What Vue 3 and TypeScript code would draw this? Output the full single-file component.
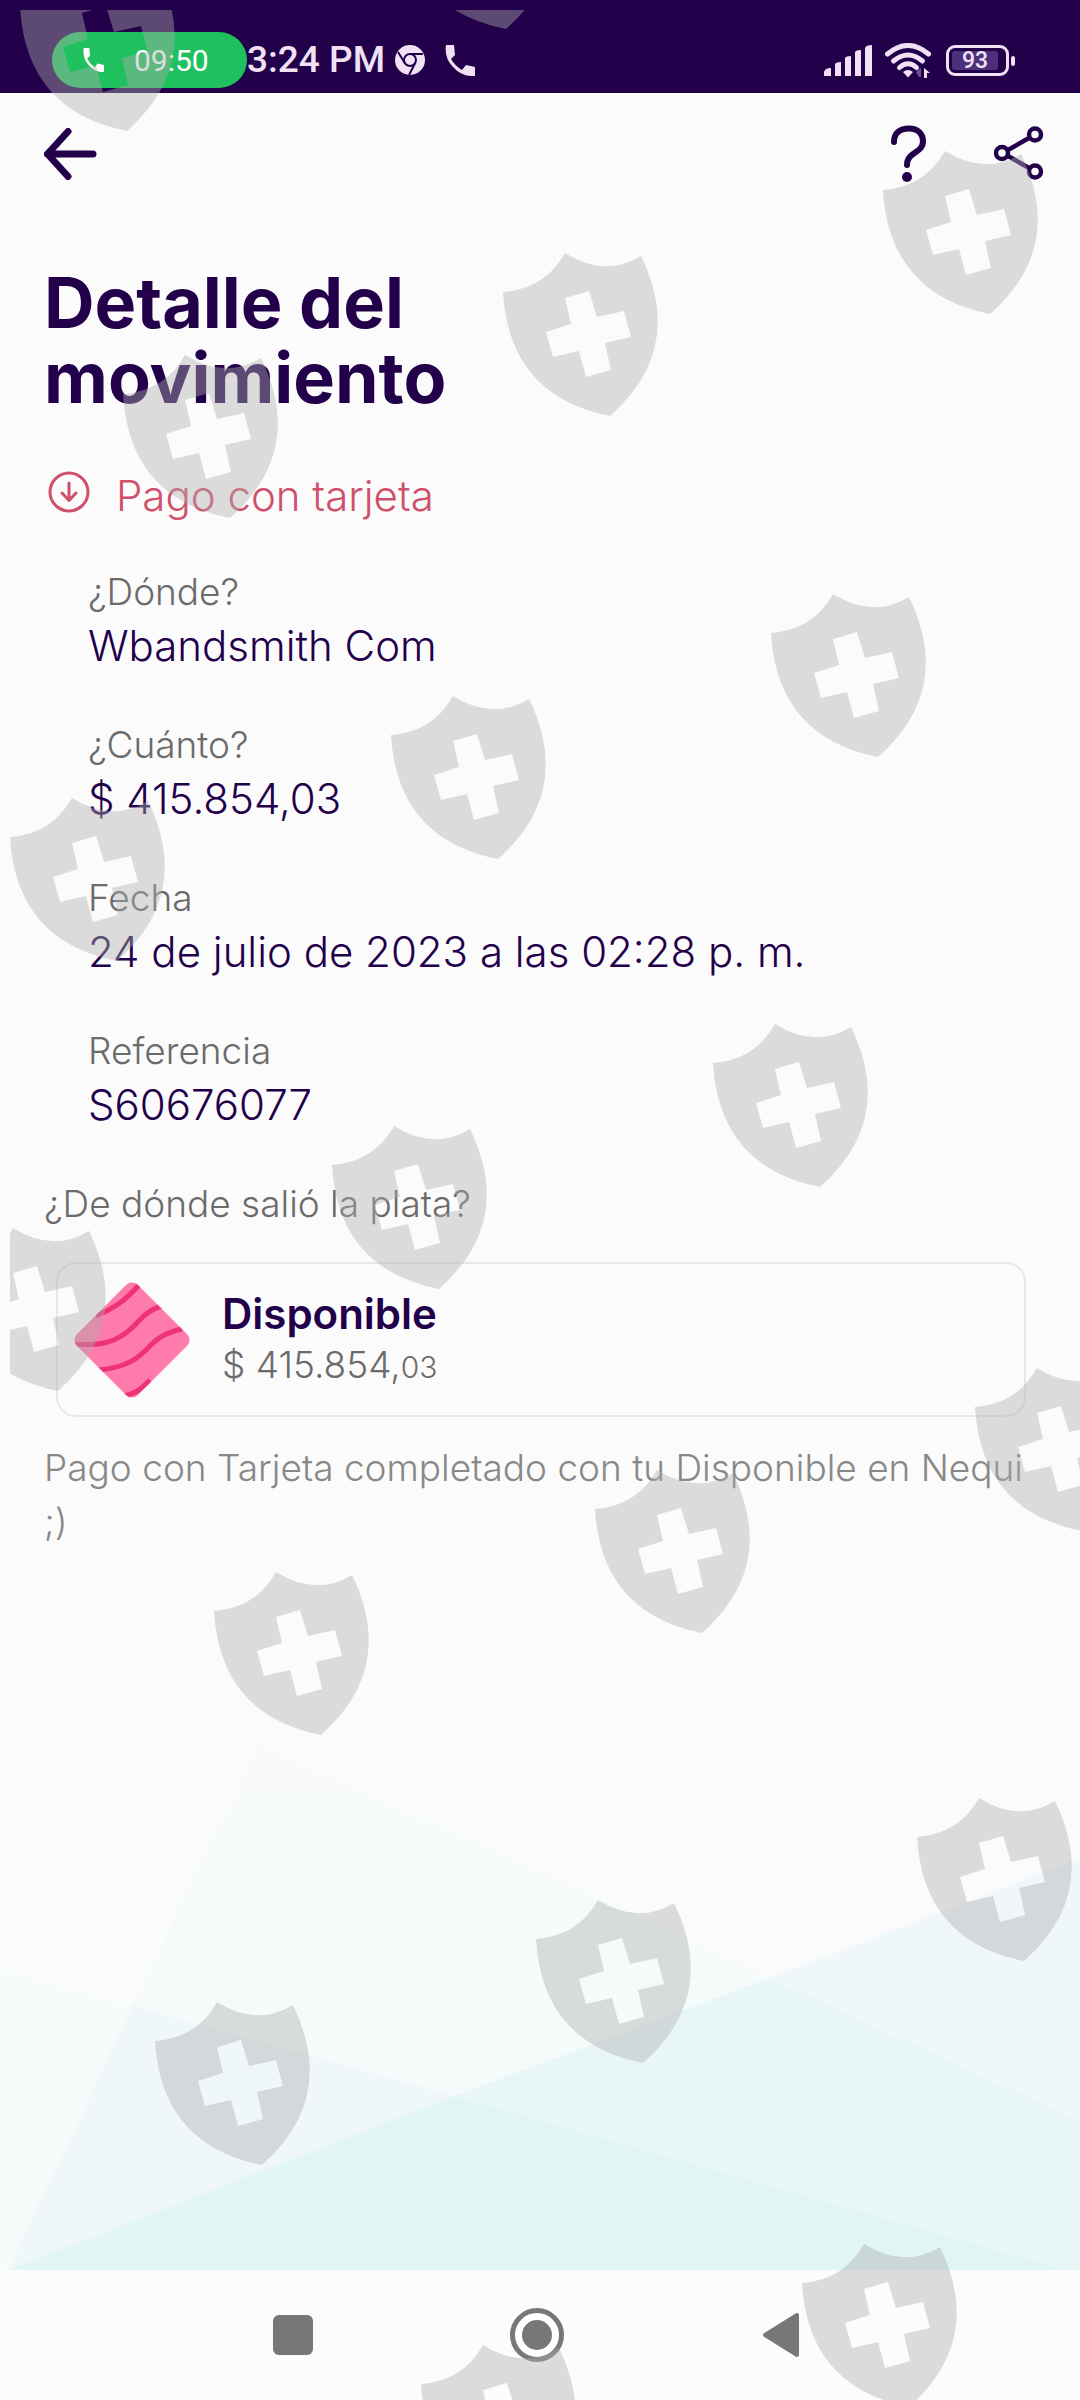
<script setup lang="ts">
interface Field {
  label: string
  value: string
}

interface Point {
  x: number
  y: number
}

const fields: Field[] = [
  { label: '¿Dónde?', value: 'Wbandsmith Com' },
  { label: '¿Cuánto?', value: '$ 415.854,03' },
  { label: 'Fecha', value: '24 de julio de 2023 a las 02:28 p. m.' },
  { label: 'Referencia', value: 'S60676077' },
]

// Top-left corner of every shield in the security watermark
const shields: Point[] = [
  { x: 399, y: -134 },
  { x: 20, y: -32 },
  { x: 883, y: 151 },
  { x: 503, y: 253 },
  { x: 123, y: 355 },
  { x: 771, y: 594 },
  { x: 391, y: 696 },
  { x: 10, y: 798 },
  { x: 713, y: 1024 },
  { x: 332, y: 1126 },
  { x: -49, y: 1228 },
  { x: 975, y: 1368 },
  { x: 595, y: 1470 },
  { x: 214, y: 1572 },
  { x: 917, y: 1798 },
  { x: 536, y: 1900 },
  { x: 155, y: 2002 },
  { x: 802, y: 2244 },
  { x: 421, y: 2345 },
]
</script>

<template>
  <div class="screen">
    <header class="status">
      <div class="call">
        <svg width="21" height="24" viewBox="0 0 30 31" preserveAspectRatio="none" aria-hidden="true">
          <path d="M1 0H9L10 10L6 14Q10 21 17 25L21 20L30 22V31Q17 32 8 22Q-1 13 1 0Z" fill="#fff" />
        </svg>
        <span>09:50</span>
      </div>
      <span class="clock">3:24 PM</span>
      <svg class="chrome" width="30" height="30" viewBox="0 0 30 30" aria-hidden="true">
        <circle cx="15" cy="15" r="15" fill="#f0e2f4" />
        <g fill="none" stroke="#22004a" stroke-width="2">
          <circle cx="15" cy="15" r="6" />
          <path d="M15 9H28M9.800 18L3 7M20.200 18L14 30" />
        </g>
      </svg>
      <svg class="phone" width="30" height="31" viewBox="0 0 30 31" aria-hidden="true">
        <path d="M1 0H9L10 10L6 14Q10 21 17 25L21 20L30 22V31Q17 32 8 22Q-1 13 1 0Z" fill="#f0e2f4" />
      </svg>
      <span class="spacer"></span>
      <svg class="signal" width="48" height="31" viewBox="0 0 48 31" aria-hidden="true">
        <g fill="#f0e2f4">
          <path d="M0 31V27Q1 23 7 23V31Z" />
          <path d="M11 31V19Q12 17 17 17V31Z" />
          <path d="M21 31V13Q22 11 27 11V31Z" />
          <path d="M31 31V7Q32 5 37 5V31Z" />
          <path d="M41 31V3Q42 0 48 0V31Z" />
        </g>
      </svg>
      <svg class="wifi" width="46" height="35" viewBox="0 0 46 35" aria-hidden="true">
        <g fill="none" stroke="#f0e2f4" stroke-width="5" stroke-linecap="round">
          <path d="M2.500 11Q23 -6 43.500 11" />
          <path d="M8.500 18Q23 6 37.500 18" />
          <path d="M14.500 24.500Q23 17 31.500 24.500" />
        </g>
        <path d="M18 29Q23 25 28 29L23 34.500Z" fill="#f0e2f4" />
        <path d="M31 29L36 25V34H34Z" fill="#6d548c" />
        <path d="M39 35V25L45 30H42V35Z" fill="#f0e2f4" />
      </svg>
      <div class="battery"><span>93</span></div>
    </header>

    <main class="page">
      <svg class="scenery" viewBox="0 0 1080 528" preserveAspectRatio="none" aria-hidden="true">
        <defs>
          <linearGradient id="peak" x1="0" y1="0" x2="0" y2="1">
            <stop offset="0" stop-color="#f9fbfa" />
            <stop offset="0.300" stop-color="#f5fbfa" />
            <stop offset="1" stop-color="#f4fbfa" />
          </linearGradient>
        </defs>
        <polygon points="0,226 133,264 8,528 0,528" fill="#f7fcfa" />
        <polygon points="8,528 258,0 770,236 454,354" fill="url(#peak)" />
        <polygon points="8,528 133,264 454,354" fill="#eff7fa" />
        <polygon points="770,236 1080,116 1080,379" fill="#f0f7fb" />
        <polygon points="454,354 770,236 1080,379 1080,528 1067,528" fill="#e9f6f8" />
        <polygon points="8,528 454,354 1067,528" fill="#e1f5f4" />
      </svg>

      <nav class="appbar">
        <button type="button" aria-label="Volver">
          <svg width="54" height="52" viewBox="0 0 54 52">
            <path d="M49 26H3.500M24 3.500L3.500 26L24 48.500" fill="none" stroke="#22004a" stroke-width="7" stroke-linecap="round" stroke-linejoin="round" />
          </svg>
        </button>
        <div class="actions">
          <button type="button" aria-label="Ayuda">
            <svg width="36" height="58" viewBox="0 0 36 58">
              <path d="M3 17C3 8 9 3.500 18 3.500C27 3.500 32 9 32 16C32 29 16 26 16 40" fill="none" stroke="#22004a" stroke-width="6" stroke-linecap="round" />
              <circle cx="16" cy="52" r="5" fill="#22004a" />
            </svg>
          </button>
          <button type="button" aria-label="Compartir">
            <svg width="50" height="56" viewBox="0 0 50 56">
              <g fill="none" stroke="#22004a" stroke-width="4.500">
                <path d="M14 24L35 12M14 30L35 42" />
                <circle cx="8" cy="27" r="6" />
                <circle cx="41" cy="8.500" r="6" />
                <circle cx="41" cy="45.500" r="6" />
              </g>
            </svg>
          </button>
        </div>
      </nav>

      <h1>Detalle del<br />movimiento</h1>

      <div class="kind">
        <svg width="42" height="42" viewBox="0 0 42 42" aria-hidden="true">
          <g fill="none" stroke="#d04f6b" stroke-width="3" stroke-linecap="round" stroke-linejoin="round">
            <circle cx="21" cy="21" r="19" />
            <path d="M21 12V29M14 22L21 29.500L28 22" />
          </g>
        </svg>
        <span>Pago con tarjeta</span>
      </div>

      <dl class="fields">
        <div v-for="field in fields" :key="field.label">
          <dt>{{ field.label }}</dt>
          <dd>{{ field.value }}</dd>
        </div>
      </dl>

      <h2>¿De dónde salió la plata?</h2>

      <section class="source">
        <svg width="116" height="116" viewBox="0 0 116 116" aria-hidden="true">
          <defs>
            <clipPath id="gem">
              <rect x="15" y="15" width="86" height="86" rx="8" transform="rotate(45 58 58)" />
            </clipPath>
          </defs>
          <g clip-path="url(#gem)">
            <rect width="116" height="116" fill="#fe7bab" />
            <g fill="none" stroke="#ee3277" stroke-width="5">
              <path d="M22 34C40 26 50 20 66 2" />
              <path d="M0 62C24 64 42 62 60 44C68 35 76 27 88 24" />
              <path d="M24 88C44 86 58 82 72 68C82 57 90 51 108 47" />
              <path d="M48 114C60 113 66 108 76 98" />
            </g>
          </g>
        </svg>
        <div>
          <h3>Disponible</h3>
          <p>$ 415.854,<small>03</small></p>
        </div>
      </section>

      <p class="note">Pago con Tarjeta completado con tu Disponible en Nequi ;)</p>
    </main>

    <footer class="navbar">
      <button type="button" aria-label="Recientes">
        <svg width="54" height="54" viewBox="0 0 54 54"><rect x="7" y="7" width="40" height="40" rx="6" fill="#777" /></svg>
      </button>
      <button type="button" aria-label="Inicio">
        <svg width="54" height="54" viewBox="0 0 54 54">
          <circle cx="27" cy="27" r="24.500" fill="#fff" stroke="#777" stroke-width="5" />
          <circle cx="27" cy="27" r="15" fill="#777" />
        </svg>
      </button>
      <button type="button" aria-label="Atrás">
        <svg width="54" height="54" viewBox="0 0 54 54">
          <path d="M11 27L43 7V47Z" fill="#777" stroke="#777" stroke-width="4" stroke-linejoin="round" />
        </svg>
      </button>
    </footer>

    <svg class="watermark" aria-hidden="true">
      <defs>
        <path
          id="shield"
          fill-rule="evenodd"
          d="M0 39Q42 36 62 0Q102 25 138 3Q183 96 107 163Q6 143 0 39ZM62 45L68 71L43 79L50 104L76 98L83 124L108 117L102 90L128 84L121 58L94 64L86 38Z"
        />
      </defs>
      <use v-for="s in shields" :key="s.y" href="#shield" :x="s.x" :y="s.y" />
    </svg>
  </div>
</template>

<style>
body {
  margin: 0;
  background: #fbfbfb;
}
</style>

<style scoped>
.screen {
  position: relative;
  display: flex;
  flex-direction: column;
  min-height: 100vh;
  overflow: hidden;
  background: #fbfbfb;
  color: #22004a;
  font-family: Inter, 'Liberation Sans', sans-serif;
}

svg {
  display: block;
  flex: none;
}

button {
  padding: 0;
  border: 0;
  background: none;
}

.status {
  display: flex;
  align-items: center;
  box-sizing: border-box;
  height: 93px;
  padding: 27px 65px 0 52px;
  background: #22004a;
  color: #f0e2f4;
  font-family: Roboto, 'Liberation Sans', sans-serif;
}

.call {
  display: flex;
  align-items: center;
  gap: 30px;
  box-sizing: border-box;
  width: 195px;
  height: 56px;
  padding-left: 31px;
  border-radius: 28px;
  background: #1fc15f;
  color: #fff;
  font-size: 30px;
}

.clock {
  font-size: 37px;
  font-weight: 500;
  line-height: 44px;
}

.chrome {
  margin-left: 10px;
}

.phone {
  margin-left: 20px;
}

.spacer {
  flex: 1;
}

.wifi {
  margin: 0 15px 0 13px;
}

.battery {
  position: relative;
  box-sizing: border-box;
  width: 63px;
  height: 31px;
  margin-right: 6px;
  padding: 3px;
  border: 3px solid #f0e2f4;
  border-radius: 9px;
}

.battery span {
  display: block;
  width: 46px;
  border-radius: 3px;
  background: #4c317a;
  font-size: 23px;
  font-weight: 500;
  line-height: 19px;
  text-align: center;
}

.battery::after {
  content: '';
  position: absolute;
  top: 8px;
  right: -9px;
  width: 4px;
  height: 10px;
  border-radius: 2px;
  background: #f0e2f4;
}

.page {
  position: relative;
  flex: 1;
  padding: 0 44px 60px;
}

.scenery {
  position: absolute;
  left: 0;
  bottom: 0;
  width: 100%;
  height: 528px;
}

.page > :not(.scenery) {
  position: relative;
}

.appbar,
.actions {
  display: flex;
  align-items: center;
}

.appbar {
  justify-content: space-between;
  height: 122px;
  margin-right: -8px;
}

.actions {
  gap: 67px;
}

h1 {
  margin: 50px 0 52px;
  font-size: 70px;
  font-weight: 700;
  line-height: 75px;
}

.kind {
  display: flex;
  gap: 26px;
  padding-left: 4px;
  color: #d04f6b;
  font-size: 42px;
  font-weight: 300;
  line-height: 58px;
}

.kind svg {
  margin-top: 4px;
}

.fields {
  display: flex;
  flex-direction: column;
  gap: 45px;
  margin: 42px 0 45px 44px;
}

dt,
h2,
.source p {
  margin: 0;
  color: #6b6b6b;
  font-size: 37px;
  font-weight: 300;
  line-height: 50px;
}

dd {
  margin: 0;
  font-size: 42px;
  font-weight: 300;
  line-height: 58px;
}

.source {
  display: flex;
  align-items: center;
  gap: 32px;
  box-sizing: border-box;
  height: 155px;
  margin: 33px 10px 0 12px;
  padding-left: 16px;
  border: 2px solid #e8e8e8;
  border-radius: 20px;
}

h3 {
  margin: 0;
  font-size: 42px;
  font-weight: 600;
  line-height: 52px;
}

small {
  font-size: 30px;
}

.note {
  margin: 24px 0 0;
  color: #888;
  font-size: 37px;
  font-weight: 300;
  line-height: 54px;
}

.navbar {
  display: flex;
  align-items: center;
  justify-content: center;
  gap: 190px;
  height: 130px;
  padding-right: 6px;
  background: #fcfcfc;
}

.watermark {
  position: absolute;
  inset: 0;
  width: 100%;
  height: 100%;
  clip-path: inset(10px 0 0 10px);
  fill: rgba(175, 175, 175, 0.42);
  pointer-events: none;
}
</style>
